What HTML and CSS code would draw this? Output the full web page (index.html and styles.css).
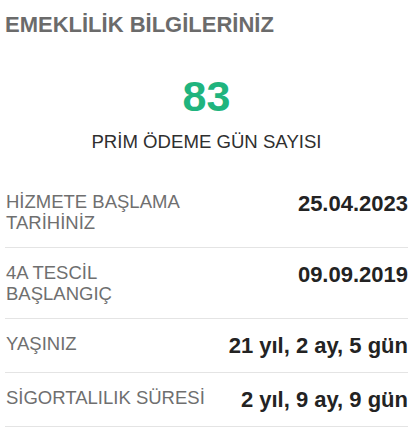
FILE: index.html
```html
<!DOCTYPE html>
<html>
  <head>
    <title>Emeklilik Bilgileriniz</title>
    <link rel="stylesheet" href="styles.css">
  </head>
  <body>
    <div class="page">
      <h1 class="title">EMEKLİLİK BİLGİLERİNİZ</h1>

      <div class="summary">
        <div class="summary-count">83</div>
        <div class="summary-label">PRİM ÖDEME GÜN SAYISI</div>
      </div>

      <ul class="info-list">
        <li class="info-row">
          <span class="info-label">HİZMETE BAŞLAMA<br />TARİHİNİZ</span>
          <span class="info-value">25.04.2023</span>
        </li>
        <li class="info-row">
          <span class="info-label">4A TESCİL<br />BAŞLANGIÇ</span>
          <span class="info-value">09.09.2019</span>
        </li>
        <li class="info-row">
          <span class="info-label">YAŞINIZ</span>
          <span class="info-value">21 yıl, 2 ay, 5 gün</span>
        </li>
        <li class="info-row">
          <span class="info-label">SİGORTALILIK SÜRESİ</span>
          <span class="info-value">2 yıl, 9 ay, 9 gün</span>
        </li>
      </ul>
    </div>
  </body>
</html>
```

FILE: styles.css
```css
html,
body {
  margin: 0;
  padding: 0;
  background: #ffffff;
  font-family: "Liberation Sans", Arial, sans-serif;
}

.page {
  padding: 12px 7px 0 5px;
}

.title {
  margin: 0;
  font-size: 22px;
  line-height: 26px;
  font-weight: 700;
  color: #6b6b6b;
}

.summary {
  margin-top: 34px;
  text-align: center;
}

.summary-count {
  font-size: 43px;
  line-height: 48px;
  font-weight: 700;
  color: #20b47e;
}

.summary-label {
  margin-top: 11px;
  font-size: 18.6px;
  line-height: 22px;
  color: #2f2f2f;
}

.info-list {
  list-style: none;
  margin: 24px 0 0;
  padding: 0;
}

.info-row {
  display: flex;
  justify-content: space-between;
  align-items: flex-start;
  gap: 12px;
  padding: 14px 0;
  border-bottom: 1px solid #e4e4e4;
}

.info-label {
  padding-left: 1px;
  font-size: 18.5px;
  line-height: 21px;
  color: #6f6f6f;
}

.info-value {
  font-size: 22px;
  line-height: 25px;
  font-weight: 700;
  color: #232323;
  white-space: nowrap;
}
```
